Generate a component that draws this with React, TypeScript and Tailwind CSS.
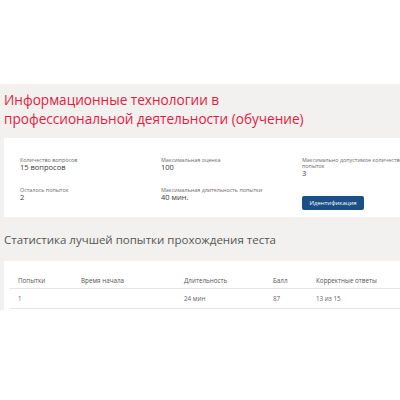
import React from "react";

function Field({ label, value }: { label: string; value: string }) {
  return (
    <div className="flex flex-col">
      <div className="text-[5.4px] leading-[6px] text-[#6b6b6b]">{label}</div>
      <div className="text-[7.5px] leading-[8px] text-[#3a3a3a]">{value}</div>
    </div>
  );
}

export default function App() {
  return (
    <div
      className="w-[400px] h-[400px] bg-white overflow-hidden"
      style={{ fontFamily: '"Open Sans", "Noto Sans", sans-serif' }}
    >
      <div className="h-[84px]" />
      <div className="h-[226px] bg-[#f2f1ef] pl-[4px] overflow-hidden">
        <h1 className="pt-[6px] text-[13.6px] leading-[19px] font-medium text-[#e41b3f] whitespace-nowrap">
          Информационные технологии в
          <br />
          профессиональной деятельности (обучение)
        </h1>
        <div className="mt-[10px] h-[79px] w-[420px] bg-white pl-[16px] pt-[19px] grid grid-cols-[141px_141px_1fr] grid-rows-[30px_30px]">
          <Field label="Количество вопросов" value="15 вопросов" />
          <Field label="Максимальная оценка" value="100" />
          <div className="flex flex-col">
            <div className="text-[5.4px] leading-[6px] text-[#6b6b6b] w-[112px]">
              Максимально допустимое количество попыток
            </div>
            <div className="text-[7.5px] leading-[8px] text-[#3a3a3a]">3</div>
          </div>
          <Field label="Осталось попыток" value="2" />
          <Field label="Максимальная длительность попытки" value="40 мин." />
          <div>
            <button className="w-[62px] h-[14px] rounded-[2px] bg-[#1d4f87] text-white text-[6px] leading-[14px] text-center">
              Идентификация
            </button>
          </div>
        </div>
        <h2 className="mt-[15px] text-[11.5px] leading-[16px] font-normal text-[#555]">
          Статистика лучшей попытки прохождения теста
        </h2>
        <div className="mt-[13px] h-[80px] w-[420px] bg-white pl-[6px] pt-[13px]">
          <div className="grid grid-cols-[63px_103px_89px_43px_1fr] pl-[8px] h-[15px] text-[6.3px] leading-[14px] text-[#555] border-b border-[#e4e4e4]">
            <div>Попытки</div>
            <div>Время начала</div>
            <div>Длительность</div>
            <div>Балл</div>
            <div>Корректные ответы</div>
          </div>
          <div className="grid grid-cols-[63px_103px_89px_43px_1fr] pl-[8px] h-[20px] text-[6.3px] leading-[19px] text-[#666] border-b border-[#e4e4e4]">
            <div>1</div>
            <div></div>
            <div>24 мин</div>
            <div>87</div>
            <div>13 из 15</div>
          </div>
        </div>
      </div>
    </div>
  );
}
